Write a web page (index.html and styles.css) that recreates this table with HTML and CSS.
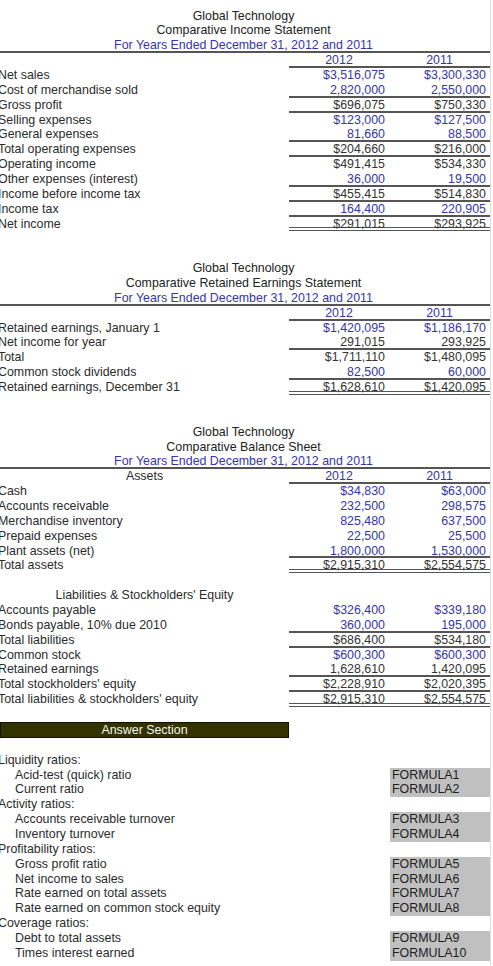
FILE: index.html
```html
<!DOCTYPE html>
<html>
<head>
<meta charset="utf-8">
<title>Global Technology</title>
<link rel="stylesheet" href="styles.css">
</head>
<body>
<main class="sheet">

  <section class="stmt">
    <div class="title">Global Technology</div>
    <div class="title">Comparative Income Statement</div>
    <div class="title date rule">For Years Ended December 31, 2012 and 2011</div>
    <div class="label"></div><div class="year u">2012</div><div class="year u">2011</div>

    <div class="label">Net sales</div><div class="num in">$3,516,075</div><div class="num in">$3,300,330</div>
    <div class="label">Cost of merchandise sold</div><div class="num in u">2,820,000</div><div class="num in u">2,550,000</div>
    <div class="label">Gross profit</div><div class="num u">$696,075</div><div class="num u">$750,330</div>
    <div class="label">Selling expenses</div><div class="num in">$123,000</div><div class="num in">$127,500</div>
    <div class="label">General expenses</div><div class="num in u">81,660</div><div class="num in u">88,500</div>
    <div class="label">Total operating expenses</div><div class="num u">$204,660</div><div class="num u">$216,000</div>
    <div class="label">Operating income</div><div class="num">$491,415</div><div class="num">$534,330</div>
    <div class="label">Other expenses (interest)</div><div class="num in u">36,000</div><div class="num in u">19,500</div>
    <div class="label">Income before income tax</div><div class="num u">$455,415</div><div class="num u">$514,830</div>
    <div class="label">Income tax</div><div class="num in u">164,400</div><div class="num in u">220,905</div>
    <div class="label">Net income</div><div class="num uu">$291,015</div><div class="num uu">$293,925</div>
  </section>

  <section class="stmt">
    <div class="title">Global Technology</div>
    <div class="title">Comparative Retained Earnings Statement</div>
    <div class="title date rule">For Years Ended December 31, 2012 and 2011</div>
    <div class="label"></div><div class="year u">2012</div><div class="year u">2011</div>

    <div class="label">Retained earnings, January 1</div><div class="num in">$1,420,095</div><div class="num in">$1,186,170</div>
    <div class="label">Net income for year</div><div class="num u">291,015</div><div class="num u">293,925</div>
    <div class="label">Total</div><div class="num">$1,711,110</div><div class="num">$1,480,095</div>
    <div class="label">Common stock dividends</div><div class="num in u">82,500</div><div class="num in u">60,000</div>
    <div class="label">Retained earnings, December 31</div><div class="num uu">$1,628,610</div><div class="num uu">$1,420,095</div>
  </section>

  <section class="stmt">
    <div class="title">Global Technology</div>
    <div class="title">Comparative Balance Sheet</div>
    <div class="title date rule">For Years Ended December 31, 2012 and 2011</div>
    <div class="label head">Assets</div><div class="year u">2012</div><div class="year u">2011</div>

    <div class="label">Cash</div><div class="num in">$34,830</div><div class="num in">$63,000</div>
    <div class="label">Accounts receivable</div><div class="num in">232,500</div><div class="num in">298,575</div>
    <div class="label">Merchandise inventory</div><div class="num in">825,480</div><div class="num in">637,500</div>
    <div class="label">Prepaid expenses</div><div class="num in">22,500</div><div class="num in">25,500</div>
    <div class="label">Plant assets (net)</div><div class="num in u">1,800,000</div><div class="num in u">1,530,000</div>
    <div class="label">Total assets</div><div class="num uu">$2,915,310</div><div class="num uu">$2,554,575</div>

    <div class="blank"></div>
    <div class="label head">Liabilities &amp; Stockholders' Equity</div><div class="num"></div><div class="num"></div>
    <div class="label">Accounts payable</div><div class="num in">$326,400</div><div class="num in">$339,180</div>
    <div class="label">Bonds payable, 10% due 2010</div><div class="num in u">360,000</div><div class="num in u">195,000</div>
    <div class="label">Total liabilities</div><div class="num u">$686,400</div><div class="num u">$534,180</div>
    <div class="label">Common stock</div><div class="num in">$600,300</div><div class="num in">$600,300</div>
    <div class="label">Retained earnings</div><div class="num u">1,628,610</div><div class="num u">1,420,095</div>
    <div class="label">Total stockholders' equity</div><div class="num u">$2,228,910</div><div class="num u">$2,020,395</div>
    <div class="label">Total liabilities &amp; stockholders' equity</div><div class="num uu">$2,915,310</div><div class="num uu">$2,554,575</div>
  </section>

  <div class="answer-bar">Answer Section</div>

  <section class="answers">
    <div class="group">Liquidity ratios:</div><div></div>
    <div class="item">Acid-test (quick) ratio</div><div class="formula">FORMULA1</div>
    <div class="item">Current ratio</div><div class="formula">FORMULA2</div>
    <div class="group">Activity ratios:</div><div></div>
    <div class="item">Accounts receivable turnover</div><div class="formula">FORMULA3</div>
    <div class="item">Inventory turnover</div><div class="formula">FORMULA4</div>
    <div class="group">Profitability ratios:</div><div></div>
    <div class="item">Gross profit ratio</div><div class="formula">FORMULA5</div>
    <div class="item">Net income to sales</div><div class="formula">FORMULA6</div>
    <div class="item">Rate earned on total assets</div><div class="formula">FORMULA7</div>
    <div class="item">Rate earned on common stock equity</div><div class="formula">FORMULA8</div>
    <div class="group">Coverage ratios:</div><div></div>
    <div class="item">Debt to total assets</div><div class="formula">FORMULA9</div>
    <div class="item">Times interest earned</div><div class="formula">FORMULA10</div>
  </section>

</main>
</body>
</html>
```

FILE: styles.css
```css
:root {
  --r: 14.87px;
  --ink: #2b2b2b;
  --blue: #3535a8;
  --rule: #555555;
}

* { box-sizing: border-box; }

html, body {
  margin: 0;
  padding: 0;
  background: #ffffff;
}

body {
  font-family: "Liberation Sans", Arial, sans-serif;
  font-size: 12.4px;
  color: var(--ink);
  overflow: hidden;
}

.sheet {
  width: 491px;
  min-height: 966px;
  border-right: 1px solid #dedede;
  padding-top: 8.57px;
  overflow: hidden;
}

.stmt {
  display: grid;
  grid-template-columns: 289px 100px 101px;
  grid-auto-rows: var(--r);
  line-height: 14.2px;
  margin-bottom: calc(var(--r) * 2);
  white-space: nowrap;
}

.stmt:nth-of-type(3) {
  margin-bottom: var(--r);
}

.title {
  grid-column: 1 / -1;
  text-align: center;
  padding-right: 3px;
  color: #222222;
}

.date { color: var(--blue); }

.rule { border-bottom: 2px solid var(--rule); }

.label {
  text-indent: -2px;
  overflow: visible;
}

.label.head {
  text-indent: 0;
  text-align: center;
}

.blank { grid-column: 1 / -1; }

.year {
  text-align: center;
  color: var(--blue);
}

.num {
  text-align: right;
  padding-right: 4px;
  color: #333333;
}

.num.in { color: var(--blue); }

.u { border-bottom: 2px solid var(--rule); }

.uu { border-bottom: 4px double var(--rule); }

.answer-bar {
  width: 289px;
  height: 16.6px;
  margin-top: 0.35px;
  background: #333300;
  border: 1px solid #111100;
  color: #f4f4ec;
  text-align: center;
  line-height: 14.6px;
}

.answers {
  display: grid;
  grid-template-columns: 390px 101px;
  grid-auto-rows: 14.86px;
  line-height: 14.86px;
  margin-top: 14.3px;
  white-space: nowrap;
}

.group { text-indent: -2px; }

.item { padding-left: 15px; }

.formula {
  background: #c0c0c0;
  padding-left: 2px;
  color: #1e1e1e;
}
```
